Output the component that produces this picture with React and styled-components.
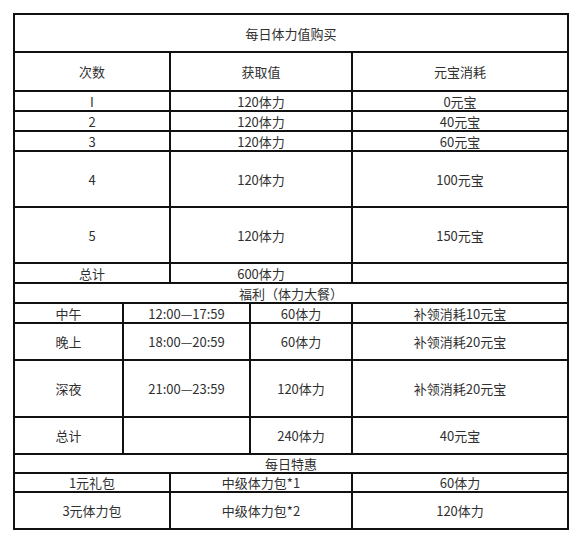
import React from "react";
import styled, { createGlobalStyle } from "styled-components";

const Global = createGlobalStyle`
  html, body { margin: 0; padding: 0; background: #fff; }
  body { font-family: "Noto Sans CJK SC", "Noto Sans", sans-serif; }
`;

const Page = styled.div`
  padding: 13px 0 0 13px;
`;

const Table = styled.table`
  border-collapse: collapse;
  table-layout: fixed;
  width: 556px;
  border: 2px solid #111;
`;

const Row = styled.tr`
  height: ${(p) => p.$h}px;
`;

const Cell = styled.td`
  border: 2px solid #111;
  padding: 1px 0 0;
  text-align: center;
  vertical-align: middle;
  font-size: 13px;
  line-height: 16px;
  color: #303030;
  white-space: nowrap;
  overflow: hidden;
`;

const cols = [109, 47, 80, 102, 216];

const purchase = [
  ["I", "120体力", "0元宝", 20],
  ["2", "120体力", "40元宝", 20],
  ["3", "120体力", "60元宝", 20],
  ["4", "120体力", "100元宝", 56],
  ["5", "120体力", "150元宝", 56],
  ["总计", "600体力", "", 20],
];

const welfare = [
  ["中午", "12:00—17:59", "60体力", "补领消耗10元宝", 20],
  ["晚上", "18:00—20:59", "60体力", "补领消耗20元宝", 37],
  ["深夜", "21:00—23:59", "120体力", "补领消耗20元宝", 57],
  ["总计", "", "240体力", "40元宝", 37],
];

const deals = [
  ["1元礼包", "中级体力包*1", "60体力", 19],
  ["3元体力包", "中级体力包*2", "120体力", 37],
];

export default function App() {
  return (
    <Page>
      <Global />
      <Table>
        <colgroup>
          {cols.map((w, i) => (
            <col key={i} style={{ width: w }} />
          ))}
        </colgroup>
        <tbody>
          <Row $h={38}>
            <Cell colSpan={5}>每日体力值购买</Cell>
          </Row>
          <Row $h={39}>
            <Cell colSpan={2}>次数</Cell>
            <Cell colSpan={2}>获取值</Cell>
            <Cell>元宝消耗</Cell>
          </Row>
          {purchase.map(([a, b, c, h], i) => (
            <Row key={"p" + i} $h={h}>
              <Cell colSpan={2}>{a}</Cell>
              <Cell colSpan={2}>{b}</Cell>
              <Cell>{c}</Cell>
            </Row>
          ))}
          <Row $h={20}>
            <Cell colSpan={5}>福利（体力大餐）</Cell>
          </Row>
          {welfare.map(([a, b, c, d, h], i) => (
            <Row key={"w" + i} $h={h}>
              <Cell>{a}</Cell>
              <Cell colSpan={2}>{b}</Cell>
              <Cell>{c}</Cell>
              <Cell>{d}</Cell>
            </Row>
          ))}
          <Row $h={19}>
            <Cell colSpan={5}>每日特惠</Cell>
          </Row>
          {deals.map(([a, b, c, h], i) => (
            <Row key={"d" + i} $h={h}>
              <Cell colSpan={2}>{a}</Cell>
              <Cell colSpan={2}>{b}</Cell>
              <Cell>{c}</Cell>
            </Row>
          ))}
        </tbody>
      </Table>
    </Page>
  );
}
